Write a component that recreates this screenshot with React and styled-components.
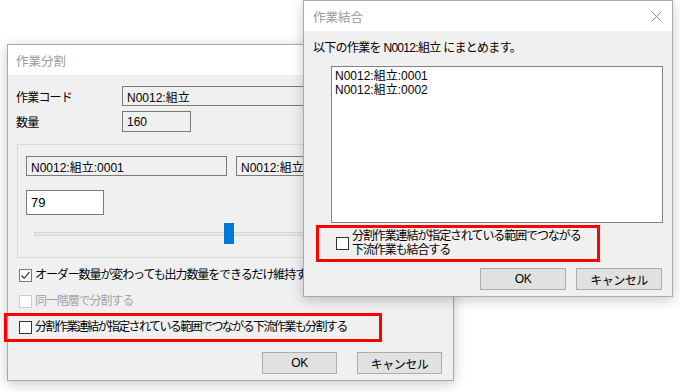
import React from "react";
import styled, { createGlobalStyle } from "styled-components";

const GlobalStyle = createGlobalStyle`
  body {
    margin: 0;
    background: #ffffff;
    font-family: "Liberation Sans", "Noto Sans CJK JP", sans-serif;
    font-size: 12px;
    color: #000;
  }
`;

const Desktop = styled.div`
  position: relative;
  width: 680px;
  height: 392px;
  overflow: hidden;
  background: #fff;
`;

const Window = styled.div`
  position: absolute;
  left: ${(p) => p.$x}px;
  top: ${(p) => p.$y}px;
  width: ${(p) => p.$w}px;
  height: ${(p) => p.$h}px;
  box-sizing: border-box;
  background: #f0f0f0;
  border: 1px solid #a9a9a9;
  box-shadow: 0 3px 12px rgba(0, 0, 0, 0.22);
  display: flex;
  flex-direction: column;
`;

const TitleBar = styled.div`
  height: 30px;
  flex: none;
  background: #fff;
  display: flex;
  align-items: center;
  justify-content: space-between;
  padding: 0 10px 0 ${(p) => p.$pad}px;
  color: #9a9a9a;
  font-size: 12.5px;
`;

const Body = styled.div`
  flex: 1;
  display: flex;
  flex-direction: column;
`;

const FieldRow = styled.div`
  display: flex;
  align-items: center;
  margin-top: ${(p) => p.$mt}px;
  padding-left: 8px;
`;

const Label = styled.div`
  width: 106px;
  letter-spacing: -0.8px;
`;

const Field = styled.div`
  box-sizing: border-box;
  width: ${(p) => p.$w}px;
  height: ${(p) => p.$h || 20}px;
  border: 1px solid #7a7a7a;
  background: ${(p) => (p.$white ? "#fff" : "#f0f0f0")};
  padding: 0 4px;
  display: flex;
  align-items: center;
  white-space: nowrap;
  overflow: hidden;
  flex: none;
  font-size: ${(p) => p.$fs || 12}px;
`;

const Panel = styled.div`
  box-sizing: border-box;
  margin: 12px 0 0 9px;
  width: 428px;
  height: 114px;
  border: 1px solid #dadada;
  padding: 11px 0 0 8px;
  display: flex;
  flex-direction: column;
`;

const SplitRow = styled.div`
  display: flex;
  gap: 9px;
`;

const Slider = styled.div`
  position: relative;
  margin: 8px 0 0 8px;
  width: 390px;
  height: 21px;
`;

const Track = styled.div`
  position: absolute;
  left: 0;
  right: 0;
  top: 9px;
  height: 4px;
  box-sizing: border-box;
  background: #e7e7e7;
  border: 1px solid #d6d6d6;
`;

const Thumb = styled.div`
  position: absolute;
  top: 0;
  width: 10px;
  height: 21px;
  background: #0078d7;
`;

const CheckRow = styled.label`
  display: flex;
  align-items: center;
  gap: 3px;
  margin-top: ${(p) => p.$mt || 0}px;
  padding-left: ${(p) => p.$pl || 0}px;
  height: ${(p) => p.$h || 18}px;
  color: ${(p) => (p.$disabled ? "#a3a3a3" : "#000")};
  white-space: nowrap;
  letter-spacing: ${(p) => p.$ls ?? -1.1}px;
  line-height: 13px;
`;

const Box = styled.span`
  box-sizing: border-box;
  width: 13px;
  height: 13px;
  flex: none;
  background: #fff;
  border: 1px solid ${(p) => p.$color || "#333"};
  display: flex;
  align-items: center;
  justify-content: center;
`;

const Highlight = styled.div`
  box-sizing: border-box;
  border: 3px solid #ff0000;
  margin: ${(p) => p.$m};
  width: ${(p) => p.$w}px;
  height: ${(p) => p.$h}px;
  display: flex;
  align-items: center;
`;

const ButtonBar = styled.div`
  display: flex;
  justify-content: flex-end;
  gap: ${(p) => p.$gap}px;
  margin-top: ${(p) => p.$mt}px;
  padding-right: ${(p) => p.$pr}px;
`;

const Button = styled.div`
  box-sizing: border-box;
  width: ${(p) => p.$w}px;
  height: 22px;
  background: #e1e1e1;
  border: 1px solid #adadad;
  display: flex;
  align-items: center;
  justify-content: center;
  letter-spacing: -0.5px;
`;

const Message = styled.div`
  margin: 9px 0 0 9px;
  line-height: 16px;
  letter-spacing: -0.7px;
  white-space: nowrap;
`;

const ListBox = styled.div`
  box-sizing: border-box;
  margin: 10px 0 0 27px;
  width: 332px;
  height: 157px;
  background: #fff;
  border: 1px solid #828282;
  padding: 2px 3px;
  line-height: 14px;
`;

const CloseIcon = () => (
  <svg width="11" height="11" viewBox="0 0 11 11">
    <path d="M0.5 0.5 L10.5 10.5 M10.5 0.5 L0.5 10.5" stroke="#8a8a8a" strokeWidth="1" fill="none" />
  </svg>
);

const CheckBox = ({ checked, color }) => (
  <Box $color={color}>
    {checked && (
      <svg width="11" height="11" viewBox="0 0 11 11">
        <path d="M1.5 5.5 L4.2 8.3 L9.5 2" stroke="#444" strokeWidth="1.3" fill="none" />
      </svg>
    )}
  </Box>
);

const SplitDialog = () => (
  <Window $x={7} $y={44} $w={447} $h={337}>
    <TitleBar $pad={8}>作業分割</TitleBar>
    <Body>
      <FieldRow $mt={11}>
        <Label>作業コード</Label>
        <Field $w={318}>N0012:組立</Field>
      </FieldRow>
      <FieldRow $mt={5}>
        <Label>数量</Label>
        <Field $w={69} $h={21}>160</Field>
      </FieldRow>
      <Panel>
        <SplitRow>
          <Field $w={201}>N0012:組立:0001</Field>
          <Field $w={201}>N0012:組立:0002</Field>
        </SplitRow>
        <Field $w={78} $h={25} $white $fs={13} style={{ marginTop: 14 }}>79</Field>
        <Slider>
          <Track />
          <Thumb style={{ left: 190 }} />
        </Slider>
      </Panel>
      <CheckRow $mt={8} $pl={11}>
        <CheckBox checked color="#7a7a7a" />
        オーダー数量が変わっても出力数量をできるだけ維持する
      </CheckRow>
      <CheckRow $mt={8} $pl={11} $disabled>
        <CheckBox color="#cccccc" />
        同一階層で分割する
      </CheckRow>
      <Highlight $m="3px 0 0 -4px" $w={378} $h={29}>
        <CheckRow $pl={12} $ls={-1.6}>
          <CheckBox />
          分割作業連結が指定されている範囲でつながる下流作業も分割する
        </CheckRow>
      </Highlight>
      <ButtonBar $mt={10} $gap={20} $pr={11}>
        <Button $w={75}>OK</Button>
        <Button $w={85}>キャンセル</Button>
      </ButtonBar>
    </Body>
  </Window>
);

const MergeDialog = () => (
  <Window $x={303} $y={0} $w={370} $h={297}>
    <TitleBar $pad={9}>
      作業結合
      <CloseIcon />
    </TitleBar>
    <Body>
      <Message>以下の作業を N0012:組立 にまとめます。</Message>
      <ListBox>
        <div>N0012:組立:0001</div>
        <div>N0012:組立:0002</div>
      </ListBox>
      <Highlight $m="2px 0 0 12px" $w={284} $h={37}>
        <CheckRow $pl={17} $h={31}>
          <CheckBox />
          <span style={{ lineHeight: "13.5px" }}>
            分割作業連結が指定されている範囲でつながる
            <br />
            下流作業も結合する
          </span>
        </CheckRow>
      </Highlight>
      <ButtonBar $mt={6} $gap={10} $pr={10}>
        <Button $w={86}>OK</Button>
        <Button $w={86}>キャンセル</Button>
      </ButtonBar>
    </Body>
  </Window>
);

export default function App() {
  return (
    <>
      <GlobalStyle />
      <Desktop>
        <SplitDialog />
        <MergeDialog />
      </Desktop>
    </>
  );
}
